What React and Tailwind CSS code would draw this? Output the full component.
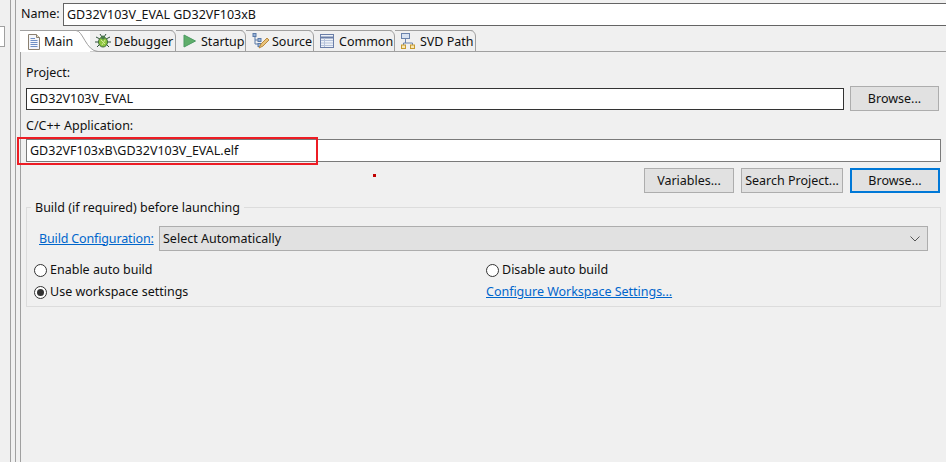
import React from 'react'

function DocIcon() {
  return (
    <svg width="14" height="16" viewBox="0 0 14 16" className="shrink-0">
      <path d="M1.5 .5H9.5L12.5 3.5V15.5H1.5Z" fill="#f4f6fb" stroke="#8b8070" />
      <path d="M9.5 .5V3.5H12.5" fill="#e8e0c8" stroke="#8b8070" />
      <path d="M3.5 4.5H8M3.5 6.5H10.5M3.5 8.5H10.5M3.5 10.5H10.5M3.5 12.5H10.5" stroke="#6f8fc4" />
    </svg>
  )
}

function BugIcon() {
  return (
    <svg width="16" height="16" viewBox="0 0 16 16" className="shrink-0">
      <path d="M1 4L5 6M15 4L11 6M0 9H4M16 9H12M2 14L5 11M14 14L11 11M5 1L7 4M11 1L9 4" stroke="#2f4f3a" />
      <ellipse cx="8" cy="9" rx="4.5" ry="5" fill="#8cc63f" stroke="#3d6b3a" />
      <circle cx="8" cy="4.5" r="2" fill="#4a7a4a" />
      <path d="M6 7L10 11M10 7L7 12" stroke="#d4ea9a" />
    </svg>
  )
}

function PlayIcon() {
  return (
    <svg width="13" height="14" viewBox="0 0 13 14" className="shrink-0">
      <path d="M1 1L12.5 7L1 13Z" fill="#5fae6a" stroke="#4b9a62" />
    </svg>
  )
}

function SourceIcon() {
  return (
    <svg width="18" height="17" viewBox="0 0 18 17" className="shrink-0">
      <path d="M3 3V11H6M3 7H6" fill="none" stroke="#5a7aa8" />
      <rect x="1" y="0.5" width="3" height="3" fill="#9bb4d8" stroke="#5a7aa8" />
      <rect x="6" y="5.5" width="3" height="3" fill="#9bb4d8" stroke="#5a7aa8" />
      <rect x="6" y="10.5" width="3" height="3" fill="#9bb4d8" stroke="#5a7aa8" />
      <path d="M7 15L9 11L15 5L17 7L11 13Z" fill="#e9c27a" stroke="#b98a3e" />
    </svg>
  )
}

function TableIcon() {
  return (
    <svg width="14" height="14" viewBox="0 0 14 14" className="shrink-0">
      <rect x="0.5" y="0.5" width="13" height="13" fill="#eef2f8" stroke="#6a7ea8" />
      <path d="M1 3.5H13" stroke="#6a7ea8" strokeWidth="2" />
      <path d="M4.5 4V13M1 6.5H13M1 9H13M1 11.5H13" stroke="#b5c2da" />
    </svg>
  )
}

function TreeIcon() {
  return (
    <svg width="14" height="16" viewBox="0 0 14 16" className="shrink-0">
      <rect x="0.5" y="0.5" width="8" height="5" fill="#d7e2f2" stroke="#6a83ad" />
      <path d="M4.5 6V10M2.5 12V10H11.5V12" fill="none" stroke="#6a83ad" />
      <rect x="0.5" y="12" width="4" height="3.5" fill="#f7e7b4" stroke="#c79a2e" />
      <rect x="9.5" y="12" width="4" height="3.5" fill="#f7e7b4" stroke="#c79a2e" />
    </svg>
  )
}

const tabs = [
  { label: 'Debugger', icon: <BugIcon />, width: 'w-[86px]', pad: 'pl-[5px]', gap: 'gap-[3px]' },
  { label: 'Startup', icon: <PlayIcon />, width: 'w-[70px]', pad: 'pl-[7px]', gap: 'gap-[5px]' },
  { label: 'Source', icon: <SourceIcon />, width: 'w-[68px]', pad: 'pl-[6px]', gap: 'gap-[2px]' },
  { label: 'Common', icon: <TableIcon />, width: 'w-[81px]', pad: 'pl-[6px]', gap: 'gap-[5px]' },
  { label: 'SVD Path', icon: <TreeIcon />, width: 'w-[81px]', pad: 'pl-[6px]', gap: 'gap-[5px]' },
]

function Tab({ tab }) {
  return (
    <div className={`relative h-[22px] ${tab.width} ${tab.pad} ${tab.gap} flex items-center border-t border-b border-[#a0a0a0] bg-[#f0f0f0] shrink-0 whitespace-nowrap`}>
      {tab.icon}
      <span className="pt-[2px]">{tab.label}</span>
      <svg width="7" height="22" viewBox="0 0 7 22" className="absolute right-0 top-[-1px]">
        <path d="M2 0H7V5C7 3 5 .5 2 0Z" fill="#f0f0f0" />
        <path d="M0 .5H1.5C4 .5 6.5 3 6.5 6V21" fill="none" stroke="#a0a0a0" />
      </svg>
    </div>
  )
}

function Button({ children, className = 'border border-[#adadad]' }) {
  return (
    <button className={`w-full h-[25px] pt-[1px] bg-[#e1e1e1] text-center ${className}`}>
      {children}
    </button>
  )
}

function Radio({ checked, label }) {
  return (
    <label className="flex items-center h-[22px]">
      <span className="w-[13px] h-[13px] rounded-full border border-[#333] bg-white flex items-center justify-center">
        {checked && <span className="w-[7px] h-[7px] rounded-full bg-[#333]" />}
      </span>
      <span className="ml-[3px]">{label}</span>
    </label>
  )
}

export default function App() {
  return (
    <div className="w-[946px] h-[462px] overflow-hidden bg-[#f0f0f0] flex text-[#111] text-[12.5px] font-['Noto_Sans',sans-serif]">
      {/* left view edge */}
      <div className="w-[20px] h-full shrink-0 flex">
        <div className="w-[10px] pt-[26px]">
          <div className="w-[5px] h-[21px] bg-white border border-l-0 border-[#a0a0a0]" />
        </div>
        <div className="w-[5px] border-l border-[#a0a0a0]" />
        <div className="w-[5px] border-l border-[#a0a0a0]" />
      </div>

      <div className="flex-1 min-w-0 flex flex-col">
        {/* name row */}
        <div className="flex items-center pt-[2px] h-[30px] pb-[4px]">
          <span className="w-[43px] pl-[1px] shrink-0">Name:</span>
          <div className="flex-1 h-[23px] bg-white border border-r-0 border-[#646464] pl-[3px] leading-[21px]">
            GD32V103V_EVAL GD32VF103xB
          </div>
        </div>

        {/* tabs */}
        <div className="flex">
          <div className="relative z-10 h-[22px] w-[70px] shrink-0 pl-[7px] flex items-center gap-[3px] bg-white border-t border-[#a0a0a0]">
            <DocIcon />
            <span className="pt-[2px]">Main</span>
            <svg width="26" height="22" viewBox="0 0 26 22" className="absolute right-[-9px] top-[-1px]">
              <path d="M0 .5H3C10 .5 13 21 25 21.5H0Z" fill="white" />
              <path d="M0 .5H3C10 .5 13 21 25 21.5" fill="none" stroke="#a0a0a0" />
            </svg>
          </div>
          {tabs.map(t => <Tab key={t.label} tab={t} />)}
          <div className="flex-1 h-[22px] border-b border-[#a0a0a0]" />
        </div>

        {/* main panel */}
        <div className="flex-1 border-l border-[#a0a0a0] pl-[5px] pt-[12px]">
          <div className="h-[18px] leading-[18px]">Project:</div>
          <div className="flex gap-[6px] mt-[4px] items-center">
            <div className="w-[818px] h-[22px] bg-white border border-[#333] pl-[3px] leading-[20px]">GD32V103V_EVAL</div>
            <div className="w-[89px]"><Button>Browse...</Button></div>
          </div>

          <div className="h-[18px] leading-[18px] mt-[6px]">C/C++ Application:</div>
          <div className="relative w-[915px] h-[23px] bg-white border border-[#7a7a7a] pl-[3px] leading-[21px] mt-[4px]">
            GD32VF103xB\GD32V103V_EVAL.elf
            <div className="absolute left-[-10px] top-[-3px] w-[301px] h-[28px] border-2 border-[#ed1c24]" />
            <div className="absolute left-[346px] top-[34px] w-[3px] h-[3px] bg-[#c00000]" />
          </div>

          <div className="flex justify-end w-[914px] gap-[7px] mt-[6px]">
            <div className="w-[90px]"><Button>Variables...</Button></div>
            <div className="w-[102px]"><Button>Search Project...</Button></div>
            <div className="w-[90px]"><Button className="border-2 border-[#0078d7]">Browse...</Button></div>
          </div>

          {/* build group */}
          <div className="relative w-[915px] h-[100px] mt-[14px] border border-[#dcdcdc] pl-[7px]">
            <span className="absolute left-[4px] top-[-9px] px-[4px] bg-[#f0f0f0]">Build (if required) before launching</span>
            <div className="flex items-center mt-[18px] pl-[5px] pr-[12px]">
              <a className="text-[#0066cc] underline w-[120px] shrink-0 tracking-[-0.15px] pt-[1px]">Build Configuration:</a>
              <div className="flex-1 h-[25px] bg-[#e1e1e1] border border-[#adadad] flex items-center justify-between pl-[3px] pr-[7px]">
                <span className="pt-[1px]">Select Automatically</span>
                <svg width="10" height="6" viewBox="0 0 10 6"><path d="M.5 .5L5 5L9.5 .5" fill="none" stroke="#555" /></svg>
              </div>
            </div>
            <div className="grid grid-cols-[452px_1fr] mt-[8px]">
              <Radio label="Enable auto build" />
              <Radio label="Disable auto build" />
              <Radio checked label="Use workspace settings" />
              <a className="text-[#0066cc] underline leading-[22px] tracking-[-0.02px]">Configure Workspace Settings...</a>
            </div>
          </div>
        </div>
      </div>
    </div>
  )
}
